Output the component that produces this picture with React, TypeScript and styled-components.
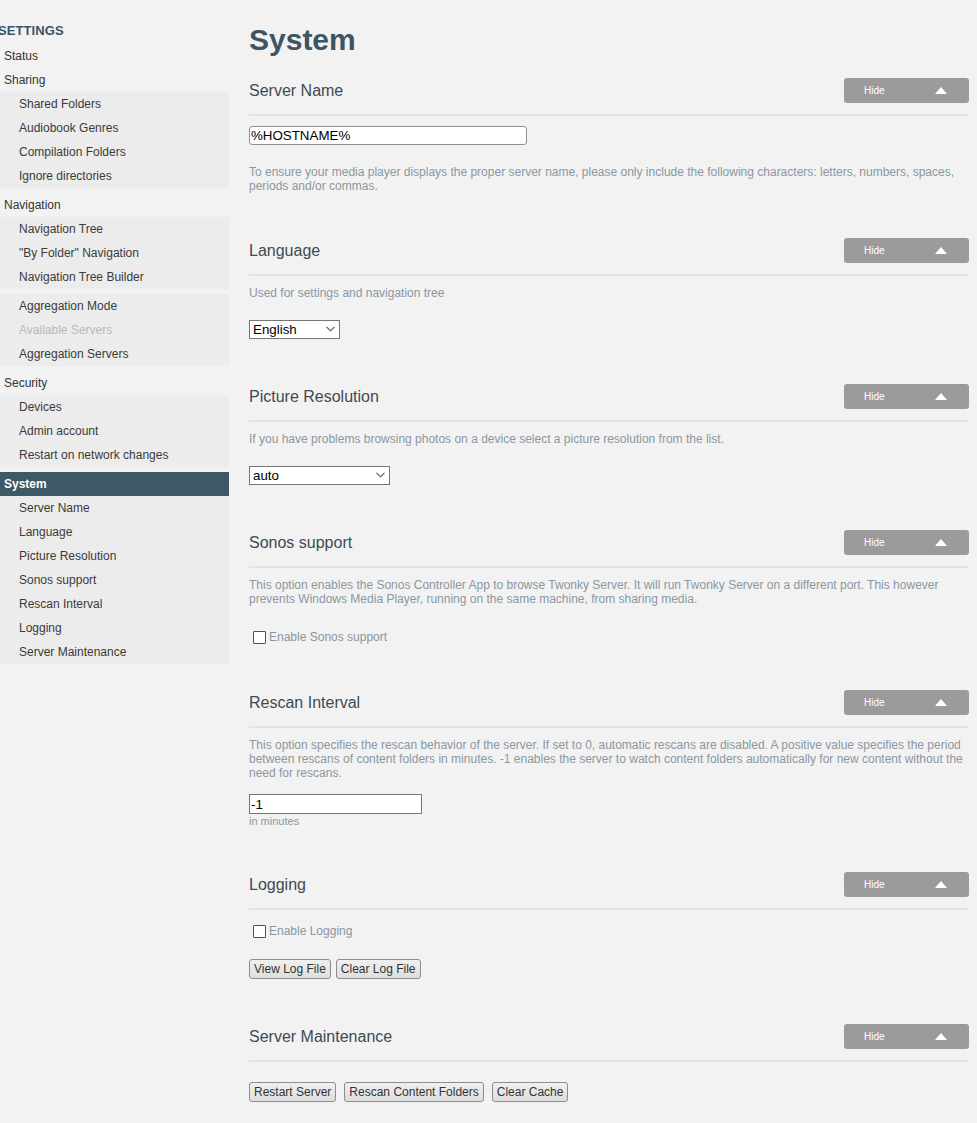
import React from "react";
import styled, { createGlobalStyle } from "styled-components";

const Global = createGlobalStyle`
  html, body { margin: 0; padding: 0; background: #f2f2f2; }
  body { font-family: "Liberation Sans", Arial, sans-serif; }
  * { box-sizing: border-box; }
`;

const Page = styled.div`
  display: flex;
  align-items: flex-start;
  width: 977px;
  min-height: 1123px;
  background: #f2f2f2;
`;

const Sidebar = styled.nav`
  width: 229px;
  flex: none;
  display: flex;
  flex-direction: column;
`;

const SideHeading = styled.div`
  margin: 21px 0 3px -2px;
  height: 20px;
  line-height: 20px;
  font-size: 13px;
  font-weight: bold;
  color: #3c5463;
  letter-spacing: 0.1px;
`;

const TopItem = styled.div<{ $active?: boolean }>`
  height: 24px;
  line-height: 24px;
  padding-left: 4px;
  font-size: 12px;
  color: ${(p) => (p.$active ? "#ffffff" : "#333333")};
  background: ${(p) => (p.$active ? "#3e5866" : "transparent")};
  font-weight: ${(p) => (p.$active ? "bold" : "normal")};
`;

const Group = styled.div<{ $gapAfter?: boolean }>`
  background: #ececec;
  margin-bottom: ${(p) => (p.$gapAfter ? "5px" : "0")};
`;

const SubItem = styled.div<{ $disabled?: boolean }>`
  height: 24px;
  line-height: 24px;
  padding-left: 19px;
  font-size: 12px;
  color: ${(p) => (p.$disabled ? "#b9b9b9" : "#3a3a3a")};
`;

const Main = styled.main`
  flex: 1;
  padding: 22px 8px 0 20px;
`;

const Title = styled.h1`
  margin: 0 0 20px;
  height: 36px;
  line-height: 36px;
  font-size: 30px;
  font-weight: bold;
  color: #3c5463;
`;

const Section = styled.section`
  margin-bottom: 45px;
`;

const SectionHeader = styled.div`
  display: flex;
  align-items: center;
  justify-content: space-between;
  height: 25px;
`;

const SectionTitle = styled.h2`
  margin: 0;
  font-size: 16px;
  font-weight: normal;
  color: #3d4a53;
`;

const HideButton = styled.button`
  width: 125px;
  height: 25px;
  border: none;
  border-radius: 3px;
  background: #9b9b9b;
  color: #ffffff;
  font-family: "Liberation Sans", Arial, sans-serif;
  font-size: 10px;
  padding: 0 22px 0 20px;
  display: flex;
  align-items: center;
  justify-content: space-between;
  cursor: pointer;
`;

const Divider = styled.div`
  margin-top: 11px;
  height: 2px;
  background: #e4e4e4;
`;

const Content = styled.div`
  padding-top: 10px;
`;

const Desc = styled.p<{ $mt?: number }>`
  margin: ${(p) => p.$mt ?? 0}px 0 0;
  font-size: 12px;
  line-height: 14px;
  color: #8b97a1;
`;

const TextInput = styled.input<{ $w: number; $h?: number; $radius?: number }>`
  display: block;
  width: ${(p) => p.$w}px;
  height: ${(p) => p.$h ?? 20}px;
  margin: 0;
  padding: 0 1px;
  border: 1px solid ${(p) => (p.$radius ? "#8f8f8f" : "#767676")};
  border-radius: ${(p) => p.$radius ?? 0}px;
  background: #ffffff;
  font-family: "Liberation Sans", Arial, sans-serif;
  font-size: 13.33px;
  color: #000;
`;

const FieldWrap = styled.div<{ $mt?: number }>`
  margin-top: ${(p) => p.$mt ?? 0}px;
`;

const SelectWrap = styled.div<{ $mt?: number }>`
  position: relative;
  display: inline-block;
  margin-top: ${(p) => p.$mt ?? 0}px;
`;

const Select = styled.select<{ $w: number }>`
  appearance: none;
  -webkit-appearance: none;
  display: block;
  width: ${(p) => p.$w}px;
  height: 19px;
  margin: 0;
  padding: 0 0 0 3px;
  border: 1px solid #767676;
  border-radius: 0;
  background: #ffffff;
  font-family: "Liberation Sans", Arial, sans-serif;
  font-size: 13.33px;
  color: #000;
`;

const Chevron = styled.svg`
  position: absolute;
  right: 5px;
  top: 6px;
  pointer-events: none;
`;

const CheckRow = styled.label<{ $mt?: number }>`
  display: flex;
  align-items: center;
  height: 16px;
  margin-top: ${(p) => p.$mt ?? 0}px;
  font-size: 12px;
  color: #8b969e;
`;

const CheckBox = styled.input`
  appearance: none;
  -webkit-appearance: none;
  width: 13px;
  height: 13px;
  margin: 0 3px 0 4px;
  border: 1px solid #4f4f4f;
  border-radius: 1px;
  background: #ffffff;
`;

const Hint = styled.div`
  margin-top: 1px;
  font-size: 11px;
  line-height: 12px;
  color: #8b97a1;
`;

const ButtonRow = styled.div<{ $mt?: number; $gap: number }>`
  display: flex;
  gap: ${(p) => p.$gap}px;
  margin-top: ${(p) => p.$mt ?? 0}px;
`;

const PlainButton = styled.button`
  height: 20px;
  margin: 0;
  padding: 0 4px;
  border: 1px solid #8d8d8d;
  border-radius: 3px;
  background: linear-gradient(#f0f0f0, #dedede);
  font-family: "Liberation Sans", Arial, sans-serif;
  font-size: 12px;
  color: #333;
  cursor: pointer;
`;

const Triangle = () => (
  <svg width="12" height="7" viewBox="0 0 12 7">
    <polygon points="6,0 12,7 0,7" fill="#ffffff" />
  </svg>
);

const ChevronIcon = () => (
  <Chevron width="9" height="6" viewBox="0 0 9 6">
    <polyline points="0.5,0.8 4.5,4.8 8.5,0.8" fill="none" stroke="#555" strokeWidth="1.1" />
  </Chevron>
);

const SectionBlock: React.FC<{ title: string; children: React.ReactNode }> = ({ title, children }) => (
  <Section>
    <SectionHeader>
      <SectionTitle>{title}</SectionTitle>
      <HideButton type="button">
        <span>Hide</span>
        <Triangle />
      </HideButton>
    </SectionHeader>
    <Divider />
    <Content>{children}</Content>
  </Section>
);

export default function App() {
  return (
    <>
      <Global />
      <Page>
        <Sidebar>
          <SideHeading>SETTINGS</SideHeading>
          <TopItem>Status</TopItem>
          <TopItem>Sharing</TopItem>
          <Group $gapAfter>
            <SubItem>Shared Folders</SubItem>
            <SubItem>Audiobook Genres</SubItem>
            <SubItem>Compilation Folders</SubItem>
            <SubItem>Ignore directories</SubItem>
          </Group>
          <TopItem>Navigation</TopItem>
          <Group $gapAfter>
            <SubItem>Navigation Tree</SubItem>
            <SubItem>"By Folder" Navigation</SubItem>
            <SubItem>Navigation Tree Builder</SubItem>
          </Group>
          <Group $gapAfter>
            <SubItem>Aggregation Mode</SubItem>
            <SubItem $disabled>Available Servers</SubItem>
            <SubItem>Aggregation Servers</SubItem>
          </Group>
          <TopItem>Security</TopItem>
          <Group $gapAfter>
            <SubItem>Devices</SubItem>
            <SubItem>Admin account</SubItem>
            <SubItem>Restart on network changes</SubItem>
          </Group>
          <TopItem $active>System</TopItem>
          <Group>
            <SubItem>Server Name</SubItem>
            <SubItem>Language</SubItem>
            <SubItem>Picture Resolution</SubItem>
            <SubItem>Sonos support</SubItem>
            <SubItem>Rescan Interval</SubItem>
            <SubItem>Logging</SubItem>
            <SubItem>Server Maintenance</SubItem>
          </Group>
        </Sidebar>

        <Main>
          <Title>System</Title>

          <SectionBlock title="Server Name">
            <TextInput $w={278} $h={19} $radius={3} defaultValue="%HOSTNAME%" />
            <Desc $mt={20}>
              To ensure your media player displays the proper server name, please only include the following
              characters: letters, numbers, spaces, periods and/or commas.
            </Desc>
          </SectionBlock>

          <SectionBlock title="Language">
            <Desc>Used for settings and navigation tree</Desc>
            <SelectWrap $mt={20}>
              <Select $w={91} defaultValue="en">
                <option value="en">English</option>
              </Select>
              <ChevronIcon />
            </SelectWrap>
          </SectionBlock>

          <SectionBlock title="Picture Resolution">
            <Desc>If you have problems browsing photos on a device select a picture resolution from the list.</Desc>
            <SelectWrap $mt={20}>
              <Select $w={141} defaultValue="auto">
                <option value="auto">auto</option>
              </Select>
              <ChevronIcon />
            </SelectWrap>
          </SectionBlock>

          <SectionBlock title="Sonos support">
            <Desc>
              This option enables the Sonos Controller App to browse Twonky Server. It will run Twonky Server on a
              different port. This however prevents Windows Media Player, running on the same machine, from sharing
              media.
            </Desc>
            <CheckRow $mt={23}>
              <CheckBox type="checkbox" />
              Enable Sonos support
            </CheckRow>
          </SectionBlock>

          <SectionBlock title="Rescan Interval">
            <Desc>
              This option specifies the rescan behavior of the server. If set to 0, automatic rescans are disabled. A
              positive value specifies the period between rescans of content folders in minutes. -1 enables the server
              to watch content folders automatically for new content without the need for rescans.
            </Desc>
            <FieldWrap $mt={14}>
              <TextInput $w={173} $h={20} defaultValue="-1" />
            </FieldWrap>
            <Hint>in minutes</Hint>
          </SectionBlock>

          <SectionBlock title="Logging">
            <CheckRow $mt={3}>
              <CheckBox type="checkbox" />
              Enable Logging
            </CheckRow>
            <ButtonRow $mt={20} $gap={5}>
              <PlainButton type="button">View Log File</PlainButton>
              <PlainButton type="button">Clear Log File</PlainButton>
            </ButtonRow>
          </SectionBlock>

          <SectionBlock title="Server Maintenance">
            <ButtonRow $mt={10} $gap={8}>
              <PlainButton type="button">Restart Server</PlainButton>
              <PlainButton type="button">Rescan Content Folders</PlainButton>
              <PlainButton type="button">Clear Cache</PlainButton>
            </ButtonRow>
          </SectionBlock>
        </Main>
      </Page>
    </>
  );
}
